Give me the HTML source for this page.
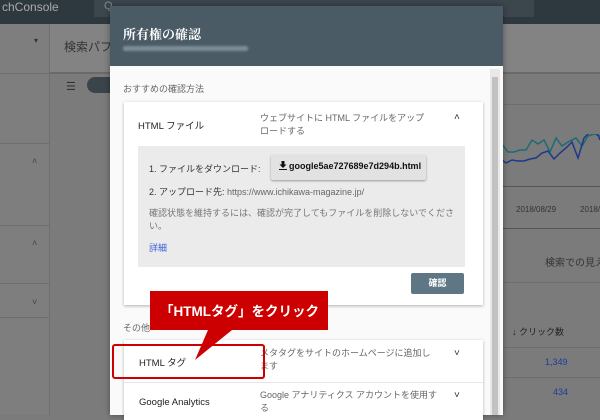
<!DOCTYPE html>
<html><head><meta charset="utf-8"><style>
*{box-sizing:border-box;margin:0;padding:0}
body{width:600px;height:415px;overflow:hidden;background:#7b7b7b;font-family:"Liberation Sans","Noto Sans CJK JP",sans-serif;position:relative;font-size:10px;color:#333}
.a{position:absolute}
.nw{white-space:nowrap}
</style></head><body>
<div class="a" style="left:0;top:0;width:600px;height:24px;background:#2e393f"></div>
<div class="a" style="left:2px;top:0;color:#aaa;font-size:12px">chConsole</div>
<div class="a" style="left:94px;top:0;width:440px;height:17px;background:#3c474d"></div>
<div class="a" style="left:104px;top:0;color:#888;font-size:11px">Q</div>
<div class="a" style="left:0;top:24px;width:50px;height:391px;background:#7e7e7e;border-right:1px solid #6e6e6e"></div>
<div class="a" style="left:0;top:73px;width:50px;height:1px;background:#6e6e6e"></div>
<div class="a" style="left:0;top:143px;width:50px;height:1px;background:#6e6e6e"></div>
<div class="a" style="left:0;top:225px;width:50px;height:1px;background:#6e6e6e"></div>
<div class="a" style="left:0;top:283px;width:50px;height:1px;background:#6e6e6e"></div>
<div class="a" style="left:0;top:317px;width:50px;height:1px;background:#6e6e6e"></div>
<div class="a" style="left:34px;top:36px;color:#333;font-size:8px">▾</div>
<div class="a" style="left:32px;top:156px;color:#444;font-size:9px">˄</div>
<div class="a" style="left:32px;top:238px;color:#444;font-size:9px">˄</div>
<div class="a" style="left:32px;top:297px;color:#444;font-size:9px">˅</div>
<div class="a" style="left:50px;top:24px;width:560px;height:50px;background:#838383;border-bottom:2px solid #6a6a6a"></div>
<div class="a nw" style="left:64px;top:38px;color:#333;font-size:12px">検索パフ</div>
<div class="a" style="left:66px;top:80px;color:#333;font-size:11px">☰</div>
<div class="a" style="left:87px;top:77px;width:30px;height:16px;border-radius:8px;background:#3a444a"></div>
<!-- right -->
<div class="a" style="left:502px;top:104px;width:98px;height:1px;background:#6e6e6e"></div>
<div class="a" style="left:502px;top:186px;width:98px;height:1px;background:#555"></div>
<div class="a" style="left:502px;top:228px;width:98px;height:1px;background:#555"></div>
<div class="a" style="left:502px;top:282px;width:98px;height:1px;background:#6e6e6e"></div>
<div class="a" style="left:502px;top:347px;width:98px;height:1px;background:#6e6e6e"></div>
<div class="a" style="left:502px;top:377px;width:98px;height:1px;background:#6e6e6e"></div>
<svg class="a" style="left:502px;top:134px" width="98" height="45"><polyline fill="none" stroke="#1d6b74" stroke-width="1.5" points="0,10 6,18 12,18 18,16 24,16 30,6 36,10 42,6 48,18 54,4 60,12 66,8 74,4 80,12 86,2 92,0 98,2"/><polyline fill="none" stroke="#1d3a8a" stroke-width="1.5" points="0,26 4,29 10,26 16,27 22,27 28,25 34,24 40,19 46,17 52,25 58,19 64,14 70,8 76,24 82,4 88,-2 94,-4 98,6"/></svg>
<div class="a nw" style="left:516px;top:205px;color:#333;font-size:8px">2018/08/29</div>
<div class="a nw" style="left:580px;top:205px;color:#333;font-size:8px">2018/</div>
<div class="a nw" style="left:545px;top:254px;color:#333;font-size:10px">検索での見え</div>
<div class="a nw" style="left:512px;top:325px;color:#222;font-size:9px">↓ クリック数</div>
<div class="a" style="left:545px;top:357px;color:#1a3d9a;font-size:9px">1,349</div>
<div class="a" style="left:553px;top:387px;color:#1a3d9a;font-size:9px">434</div>
<!-- dialog -->
<div class="a" style="left:110px;top:6px;width:393px;height:409px;background:#fafafa;box-shadow:0 0 6px rgba(0,0,0,.4)"></div>
<div class="a" style="left:110px;top:6px;width:393px;height:60px;background:#4b5b66"></div>
<div class="a" style="left:123px;top:24px;color:#fff;font-size:13px;font-weight:bold;font-family:'Noto Serif CJK SC',serif">所有権の確認</div>
<div class="a" style="left:123px;top:46px;width:125px;height:5px;background:#7c8d98;border-radius:2px;filter:blur(1px)"></div>
<div class="a" style="left:490px;top:69px;width:10px;height:346px;background:#e8e8e8"></div>
<div class="a" style="left:492px;top:77px;width:6px;height:338px;background:#c2c2c2"></div>
<div class="a" style="left:123px;top:82px;color:#666;font-size:9px">おすすめの確認方法</div>
<div class="a" style="left:124px;top:102px;width:359px;height:203px;background:#fff;box-shadow:0 1px 3px rgba(0,0,0,.3)"></div>
<div class="a nw" style="left:138px;top:118px;color:#222;font-size:9.5px">HTML ファイル</div>
<div class="a" style="left:260px;top:112px;width:172px;color:#666;font-size:9px;line-height:13px">ウェブサイトに HTML ファイルをアップロードする</div>
<div class="a" style="left:454px;top:112px;color:#333;font-size:10px">˄</div>
<div class="a" style="left:138px;top:146px;width:327px;height:121px;background:#ebebeb"></div>
<div class="a nw" style="left:149px;top:162px;color:#333;font-size:9px">1. ファイルをダウンロード:</div>
<div class="a nw" style="left:271px;top:155px;width:155px;height:25px;background:#e2e2e2;box-shadow:0 1px 2px rgba(0,0,0,.35);border-radius:2px;color:#111;font-size:9px;font-weight:bold;padding:6px 0 0 8px"><svg width="8" height="9" style="vertical-align:-1px;margin-right:2px"><path d="M2.5 0h3v3.5h2L4 7 .5 3.5h2z M0 8h8v1H0z" fill="#111"/></svg>google5ae727689e7d294b.html</div>
<div class="a nw" style="left:149px;top:185px;color:#333;font-size:9px">2. アップロード先: <span style="color:#666">https://www.ichikawa-magazine.jp/</span></div>
<div class="a" style="left:149px;top:207px;width:305px;color:#777;font-size:9px;line-height:13px">確認状態を維持するには、確認が完了してもファイルを削除しないでください。</div>
<div class="a" style="left:149px;top:241px;color:#3b5fd8;font-size:9px">詳細</div>
<div class="a" style="left:411px;top:273px;width:53px;height:21px;background:#5f7784;color:#fff;font-size:9px;font-weight:bold;text-align:center;line-height:21px;border-radius:2px">確認</div>
<div class="a" style="left:123px;top:321px;color:#666;font-size:9px">その他</div>
<div class="a" style="left:124px;top:340px;width:359px;height:80px;background:#fff;box-shadow:0 1px 3px rgba(0,0,0,.3)"></div>
<div class="a" style="left:124px;top:382px;width:359px;height:1px;background:#e6e6e6"></div>
<div class="a nw" style="left:139px;top:355px;color:#222;font-size:9.5px">HTML タグ</div>
<div class="a" style="left:260px;top:347px;width:178px;color:#666;font-size:9px;line-height:13px">メタタグをサイトのホームページに追加します</div>
<div class="a" style="left:454px;top:348px;color:#333;font-size:10px">˅</div>
<div class="a nw" style="left:139px;top:397px;color:#222;font-size:9.5px">Google Analytics</div>
<div class="a" style="left:260px;top:389px;width:178px;color:#666;font-size:9px;line-height:13px">Google アナリティクス アカウントを使用する</div>
<div class="a" style="left:454px;top:390px;color:#333;font-size:10px">˅</div>
<!-- callout -->
<div class="a" style="left:112px;top:344px;width:153px;height:35px;border:2.5px solid #cc0000;border-radius:3px"></div>
<svg class="a" style="left:150px;top:291px" width="180" height="72"><polygon points="0,0 178,0 178,39 82,39 45,69 58,39 0,39" fill="#cc0000"/></svg>
<div class="a nw" style="left:160px;top:300px;color:#fff;font-size:13.5px;font-weight:bold">「HTMLタグ」をクリック</div>
</body></html>
